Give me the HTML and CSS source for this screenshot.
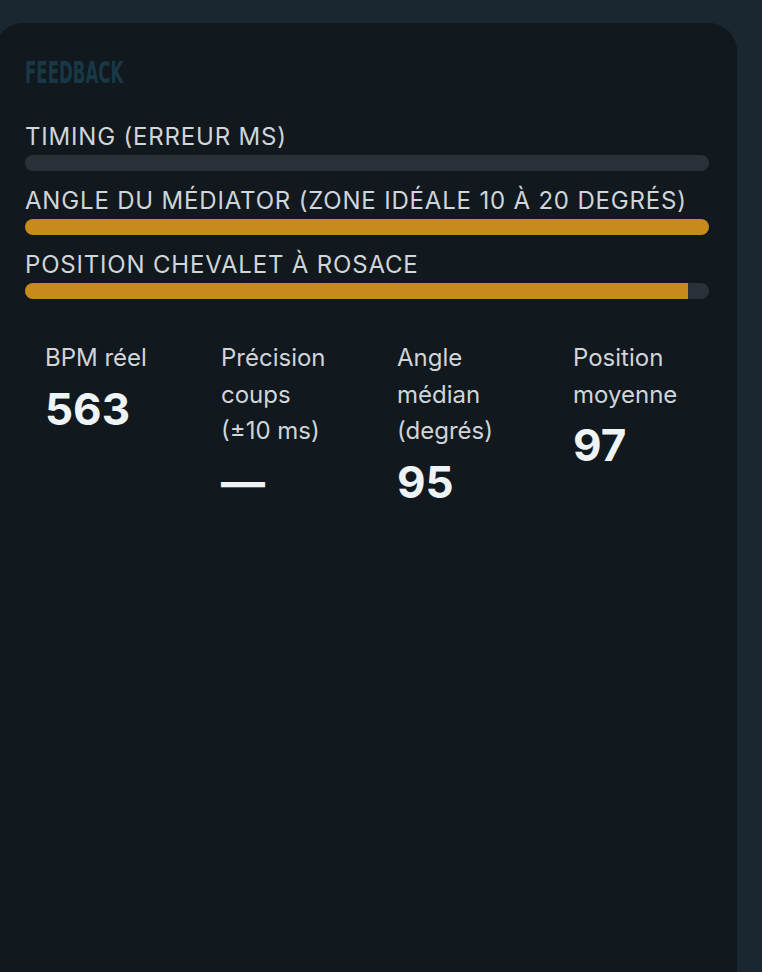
FILE: index.html
```html
<!DOCTYPE html>
<html lang="fr">
<head>
<meta charset="utf-8">
<title>Feedback</title>
<link rel="stylesheet" href="styles.css">
</head>
<body>
<section class="card">
  <h2 class="title"><span class="title-text">FEEDBACK</span></h2>
  <div class="meters">
    <div class="meter">
      <div class="meter-label">Timing (erreur ms)</div>
      <div class="track"><div class="fill" style="width:0%"></div></div>
    </div>
    <div class="meter">
      <div class="meter-label">Angle du médiator (zone idéale 10 à 20 degrés)</div>
      <div class="track"><div class="fill" style="width:100%"></div></div>
    </div>
    <div class="meter">
      <div class="meter-label">Position chevalet à rosace</div>
      <div class="track"><div class="fill" style="width:97%"></div></div>
    </div>
  </div>
  <div class="stats">
    <div class="stat">
      <div class="stat-label">BPM réel</div>
      <div class="stat-value">563</div>
    </div>
    <div class="stat">
      <div class="stat-label">Précision coups (±10 ms)</div>
      <div class="stat-value">—</div>
    </div>
    <div class="stat">
      <div class="stat-label">Angle médian (degrés)</div>
      <div class="stat-value">95</div>
    </div>
    <div class="stat">
      <div class="stat-label">Position moyenne</div>
      <div class="stat-value">97</div>
    </div>
  </div>
</section>
</body>
</html>
```
FILE: styles.css
```css
html, body {
  margin: 0;
  padding: 0;
  background: #1b2730;
  height: 100%;
  overflow: hidden;
}
body {
  font-family: Inter, "Noto Sans", "Liberation Sans", sans-serif;
  color: #cdd3d7;
}
.card {
  margin: 23px 0 0 -5px;
  width: 742px;
  min-height: 1000px;
  box-sizing: border-box;
  background: #11181e;
  border-radius: 28px;
  padding: 36px 28px 0 30px;
}
.title {
  margin: 0;
  height: 28px;
  line-height: 28px;
  font-family: "Liberation Sans Narrow", "DejaVu Sans Condensed", "Liberation Sans", sans-serif;
  font-stretch: condensed;
  font-weight: 700;
  font-size: 30px;
  color: #183847;
  white-space: nowrap;
}
.title-text {
  display: inline-block;
  transform: scaleX(0.615);
  transform-origin: left center;
}
.meters {
  margin-top: 35px;
  display: flex;
  flex-direction: column;
  gap: 15px;
}
.meter {
  display: flex;
  flex-direction: column;
  gap: 3px;
}
.meter-label {
  font-size: 24px;
  line-height: 30px;
  text-transform: uppercase;
  letter-spacing: 0.034em;
  color: #cfd5d9;
  white-space: nowrap;
}
.track {
  height: 16px;
  border-radius: 8px;
  background: #2b3138;
  overflow: hidden;
}
.fill {
  height: 100%;
  background: #c8891d;
}
.stats {
  margin-top: 41px;
  display: grid;
  grid-template-columns: repeat(4, 176px);
}
.stat {
  padding: 0 36px 0 20px;
}
.stat-label {
  font-size: 24px;
  line-height: 36.5px;
  color: #cfd5d9;
}
.stat-value {
  margin-top: 7px;
  font-size: 44px;
  line-height: 50px;
  font-weight: 700;
  color: #eef3f5;
}
```
